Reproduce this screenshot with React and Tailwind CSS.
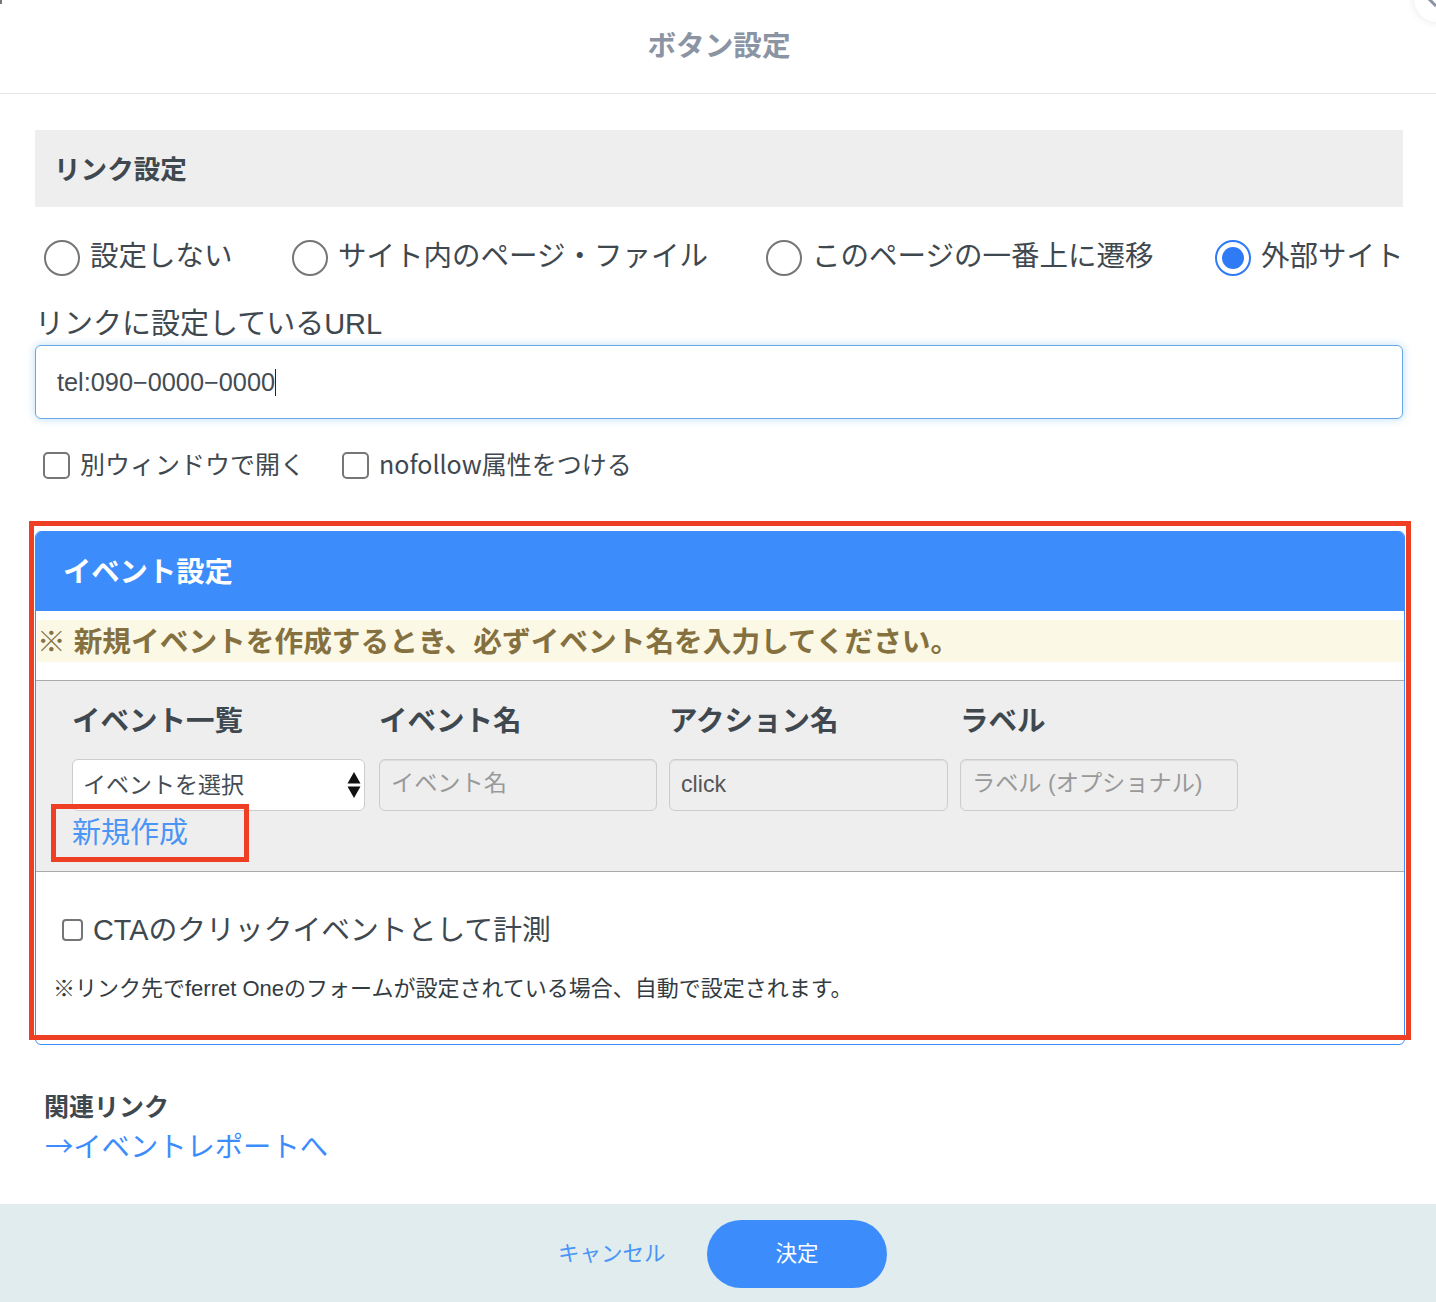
const JP = "font-['Liberation_Sans','Noto_Sans_CJK_JP',sans-serif]";
const NOTO = "font-['Noto_Sans_CJK_JP','Liberation_Sans',sans-serif]";

function Radio({ checked, label, className = "" }) {
  return (
    <label className={`flex items-center ${className}`}>
      <span
        className={`w-[36px] h-[36px] rounded-full bg-white border-2 flex items-center justify-center shrink-0 ${
          checked ? "border-[#2f7bf5]" : "border-[#767676]"
        }`}
      >
        {checked && <span className="w-[22px] h-[22px] rounded-full bg-[#2f7bf5]" />}
      </span>
      <span className="ml-[10px] h-[36px] text-[28.5px] leading-[32px] whitespace-nowrap">{label}</span>
    </label>
  );
}

function Check({ label, className = "", labelClass = "" }) {
  return (
    <label className={`flex items-center ${className}`}>
      <span className="w-[27px] h-[27px] rounded-[5px] bg-white border-2 border-[#767676] shrink-0" />
      <span className={`ml-[10px] text-[25px] leading-[27px] whitespace-nowrap ${labelClass}`}>{label}</span>
    </label>
  );
}

function Field({ label, width, children }) {
  return (
    <div className={`flex flex-col ${width}`}>
      <div className="text-[28.5px] leading-[40px] font-bold text-[#40484f] h-[40px] whitespace-nowrap">{label}</div>
      <div className="mt-[18px]">{children}</div>
    </div>
  );
}

function TextBox({ value, placeholder, width }) {
  return (
    <div
      className={`${width} h-[52px] rounded-[6px] border border-[#cccccc] bg-[#eeeeee] shadow-[inset_0_1px_1px_rgba(0,0,0,0.075)] px-[11px] flex items-center text-[23.2px] leading-[46px] whitespace-nowrap ${
        value ? "text-[#555555] pb-[2px]" : "text-[#999999] pb-[4px]"
      }`}
    >
      {value || placeholder}
    </div>
  );
}

export default function App() {
  return (
    <div className={`${JP} relative w-[1436px] h-[1302px] bg-white text-[#40484f] overflow-hidden flex flex-col`}>
      <div className="absolute left-0 top-0 w-[2px] h-[4px] bg-[#777777]" />
      <div className="absolute -right-[24px] -top-[24px] w-[46px] h-[46px] rounded-full bg-white shadow-[0_0_10px_rgba(0,0,0,0.1)]">
        <svg width="10" height="10" viewBox="0 0 10 10" className="absolute left-[13px] top-[21px]">
          <path d="M1 1 L9 9" stroke="#8a94a3" strokeWidth="3" />
        </svg>
      </div>

      <header className="h-[94px] shrink-0 border-b border-[#e6e6e6] flex items-center justify-center">
        <h1 className="text-[28.6px] font-bold text-[#8a94a3] leading-[40px] ml-[2px] pb-[2px]">ボタン設定</h1>
      </header>

      <main className="flex-1 px-[35px] pt-[36px] flex flex-col">
        <section className="w-[1368px] h-[77px] bg-[#eeeeee] pl-[19px] pt-[2px] flex items-center">
          <h2 className="text-[26.6px] font-bold leading-[40px] text-[#40484f]">リンク設定</h2>
        </section>

        <div className="flex items-center mt-[33px] pl-[9px]">
          <Radio label="設定しない" />
          <Radio label="サイト内のページ・ファイル" className="ml-[59.5px]" />
          <Radio label="このページの一番上に遷移" className="ml-[58px]" />
          <Radio checked label="外部サイト" className="ml-[61.5px]" />
        </div>

        <label className="block mt-[27px] text-[29px] leading-[42px] whitespace-nowrap">リンクに設定しているURL</label>
        <div className="w-[1368px] h-[74px] rounded-[6px] border border-[#66a9e6] bg-white shadow-[0_0_8px_rgba(102,175,233,0.45)] pl-[21px] pt-[1px] flex items-center text-[25.3px] text-[#444c54]">
          <span>tel:090−0000−0000</span>
          <span className="w-[1px] h-[27px] bg-[#222222]" />
        </div>

        <div className="flex mt-[33px] pl-[8px]">
          <Check label="別ウィンドウで開く" />
          <Check label="nofollow属性をつける" className="ml-[37px]" labelClass={`${NOTO} -mt-[4px]`} />
        </div>

        <section className="relative mt-[52px] w-[1370px] h-[514px] rounded-[6px] border border-[#3c8dfb] bg-white">
          <h2 className="h-[79px] bg-[#3c8dfb] rounded-t-[5px] pl-[27px] pt-[1px] flex items-center text-[28.3px] font-bold text-white">イベント設定</h2>

          <p className="mt-[9px] h-[42px] ml-[1px] pt-[1px] bg-[#fbf8e6] text-[#85703f] text-[28.7px] font-bold leading-[42px] whitespace-nowrap">
            ※ 新規イベントを作成するとき、必ずイベント名を入力してください。
          </p>

          <div className="relative mt-[18px] h-[192px] bg-[#eeeeee] border-y border-[#aaaaaa] pl-[36px] pt-[20px]">
            <div className="flex">
              <Field label="イベント一覧" width="w-[307px]">
                <div className="w-[293px] h-[52px] rounded-[6px] border border-[#cccccc] bg-white pl-[10px] flex items-center justify-between text-[23px] text-[#444c54] whitespace-nowrap">
                  <span className="pt-[1px]">イベントを選択</span>
                  <svg width="14" height="26" viewBox="0 0 14 26" className="mr-[3px]">
                    <path d="M7 0 L13.5 11.5 H0.5 Z M7 26 L0.5 14.5 H13.5 Z" fill="#111111" />
                  </svg>
                </div>
              </Field>
              <Field label="イベント名" width="w-[290px]">
                <TextBox placeholder="イベント名" width="w-[278px]" />
              </Field>
              <Field label="アクション名" width="w-[291px]">
                <TextBox value="click" width="w-[279px]" />
              </Field>
              <Field label="ラベル" width="w-[278px]">
                <TextBox placeholder="ラベル (オプショナル)" width="w-[278px]" />
              </Field>
            </div>
            <a className="block mt-[1px] text-[29px] leading-[42px] text-[#4a95f5]">新規作成</a>
            <div className="absolute left-[15px] top-[123px] w-[198px] h-[58px] border-[5px] border-[#ee3f24]" />
          </div>

          <div className="pl-[26px] pt-[38px] flex items-center">
            <span className="w-[21px] h-[22px] rounded-[4px] bg-white border-2 border-[#767676] shrink-0" />
            <span className="ml-[10px] text-[28.8px] leading-[40px] whitespace-nowrap">CTAのクリックイベントとして計測</span>
          </div>
          <p className="mt-[19px] ml-[17px] text-[22px] leading-[40px] text-[#333b42] whitespace-nowrap">
            ※リンク先でferret Oneのフォームが設定されている場合、自動で設定されます。
          </p>

          <div className="absolute -left-[7px] -top-[11px] w-[1382px] h-[519px] border-[5px] border-[#ee3f24]" />
        </section>

        <h3 className="mt-[42px] ml-[9px] text-[25px] font-bold leading-[40px] text-[#40484f]">関連リンク</h3>
        <a className={`${NOTO} block -mt-[2px] ml-[10px] text-[28.3px] leading-[40px] text-[#3c8dfb] whitespace-nowrap`}>→イベントレポートへ</a>
      </main>

      <footer className="h-[98px] shrink-0 bg-[#e1ecef] flex items-center justify-center pl-[9px] pt-[2px]">
        <button className="w-[106px] pr-[2px] text-[21.5px] leading-[30px] text-[#4a95f5] whitespace-nowrap">キャンセル</button>
        <button className="ml-[43px] w-[180px] h-[68px] rounded-full bg-[#3c8dfb] text-white text-[21.5px]">決定</button>
      </footer>
    </div>
  );
}
